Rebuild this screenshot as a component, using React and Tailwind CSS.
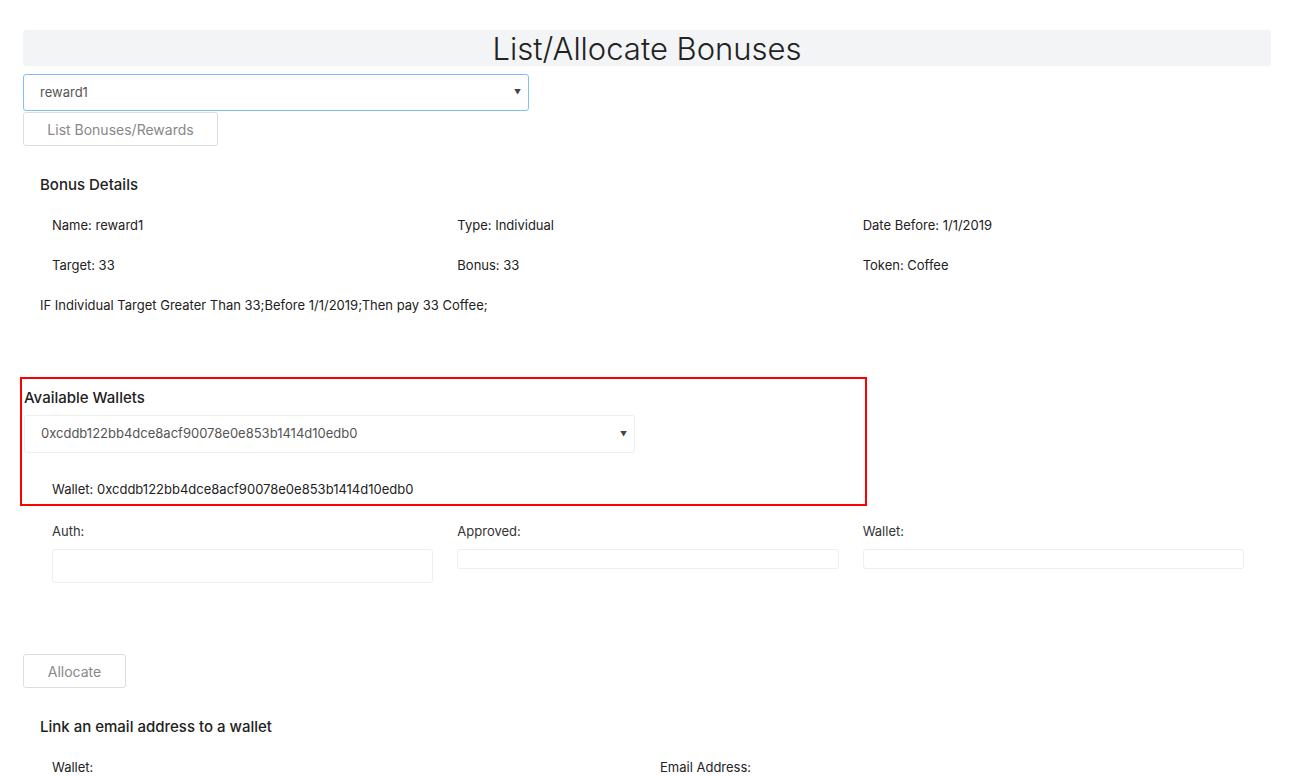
import { useState } from "react";

const Caret = () => (
    <span className="text-[7px] text-[#444] leading-none">▼</span>
);

const Field = ({ label, tall }) => (
    <div className="px-3">
        <div className="text-[13px] text-[#333] h-[18px] leading-[18px]">{label}</div>
        <div
            className={`mt-[9px] border border-[#eee] rounded-[3px] bg-white ${tall ? "h-[34px]" : "h-[20px]"}`}
        />
    </div>
);

const App = () => {
    const [reward] = useState("reward1");
    const wallet = "0xcddb122bb4dce8acf90078e0e853b1414d10edb0";

    return (
        <div
            className="min-h-screen bg-white text-[#222] pt-[30px] px-[23px] pb-6"
            style={{ fontFamily: "Inter, 'Noto Sans', sans-serif" }}
        >
            <div className="bg-[#f3f4f5] rounded-[3px] h-9 flex items-center justify-center">
                <h1 className="text-[31px] font-light text-[#222] leading-none">
                    List/Allocate Bonuses
                </h1>
            </div>

            <div className="mt-2 w-[506px] h-[37px] border border-[#80bdff] rounded-[3px] flex items-center justify-between pl-4 pr-[7px]">
                <span className="text-[13px] text-[#555]">{reward}</span>
                <Caret />
            </div>
            <button className="mt-px w-[195px] h-[34px] border border-[#ddd] rounded-[3px] text-[14px] text-[#888] bg-white">
                List Bonuses/Rewards
            </button>

            <div className="pl-[17px] pt-[29px]">
                <h2 className="text-[15px] font-medium text-[#222] leading-5">Bonus Details</h2>
                <div className="grid grid-cols-3 w-[1216px] mt-5 text-[13px] text-[#222]">
                    <div className="px-3 h-10 leading-5">Name: reward1</div>
                    <div className="px-3 h-10 leading-5">Type: Individual</div>
                    <div className="px-3 h-10 leading-5">Date Before: 1/1/2019</div>
                    <div className="px-3 h-10 leading-5">Target: 33</div>
                    <div className="px-3 h-10 leading-5">Bonus: 33</div>
                    <div className="px-3 h-10 leading-5">Token: Coffee</div>
                </div>
                <p className="text-[13px] text-[#222] leading-5">
                    IF Individual Target Greater Than 33;Before 1/1/2019;Then pay 33 Coffee;
                </p>
            </div>

            <div className="-ml-[3px] mt-[62px] w-[847px] h-[129px] border-2 border-[#ff0000] pl-[2px] pt-[9px]">
                <h2 className="text-[15px] font-medium text-[#222] leading-5">Available Wallets</h2>
                <div className="mt-[7px] w-[611px] h-[38px] border border-[#eee] rounded-[3px] flex items-center justify-between pl-4 pr-[7px]">
                    <span className="text-[13px] text-[#555]">{wallet}</span>
                    <Caret />
                </div>
                <div className="mt-[26px] pl-[28px] text-[13px] text-[#222] leading-5">Wallet: {wallet}</div>
            </div>

            <div className="pl-[17px] mt-[16px] grid grid-cols-3 w-[1233px]">
                <Field label="Auth:" tall />
                <Field label="Approved:" />
                <Field label="Wallet:" />
            </div>

            <button className="mt-[71px] w-[103px] h-[34px] border border-[#ddd] rounded-[3px] text-[14px] text-[#888] bg-white">
                Allocate
            </button>

            <div className="pl-[17px] pt-[29px]">
                <h2 className="text-[15px] font-medium text-[#222] leading-5">Link an email address to a wallet</h2>
                <div className="grid grid-cols-2 w-[1216px] mt-5 text-[13px] text-[#222]">
                    <div className="px-3 leading-5">Wallet:</div>
                    <div className="px-3 leading-5">Email Address:</div>
                </div>
            </div>
        </div>
    );
};

export default App;
